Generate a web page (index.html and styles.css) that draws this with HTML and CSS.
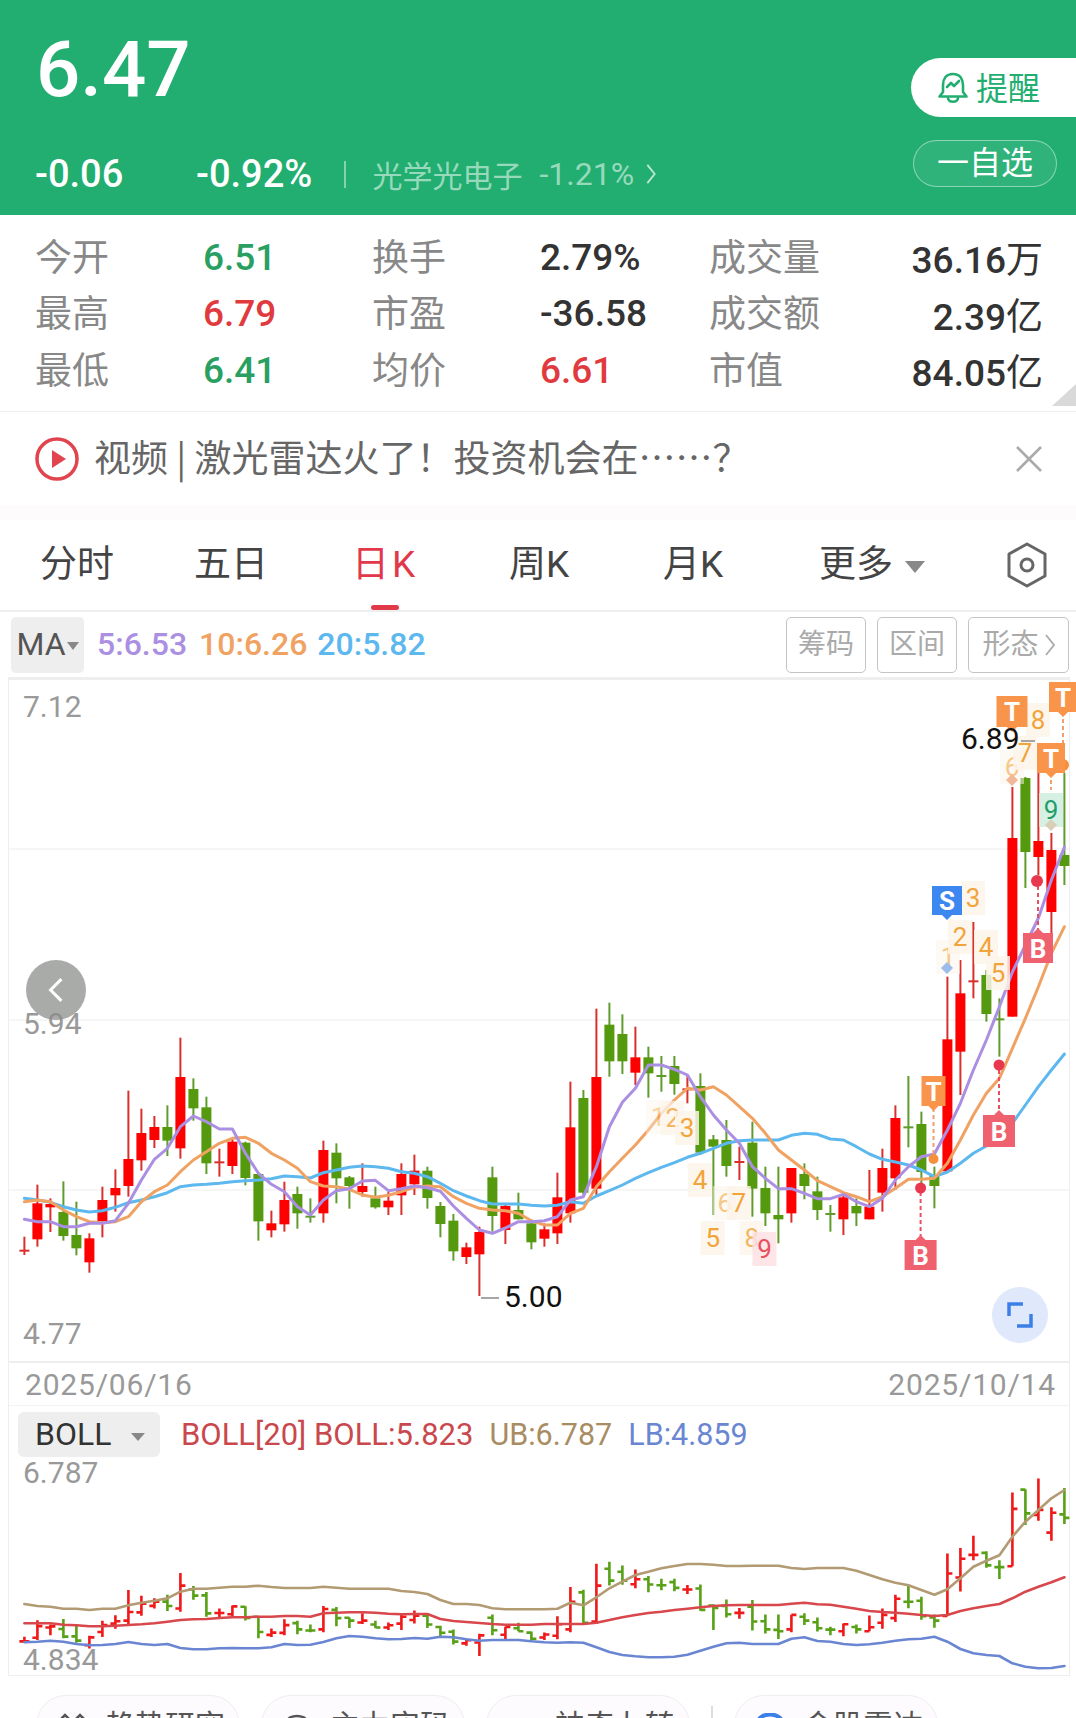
FILE: index.html
```html
<!DOCTYPE html>
<html lang="zh-CN">
<head>
<meta charset="utf-8">
<title>6.47</title>
<link rel="stylesheet" href="styles.css">
</head>
<body>
<div class="page">
  <header class="quote">
    <div class="quote-left">
      <div class="price">6.47</div>
      <div class="change-row">
        <span class="chg-a">-0.06</span>
        <span class="chg-b">-0.92%</span>
        <span class="chg-sep"></span>
        <span class="sector">光学光电子</span>
        <span class="sector-pct">-1.21%</span>
        <svg class="sector-arrow" viewBox="0 0 12 24"><path d="M2 2 L10 12 L2 22"/></svg>
      </div>
    </div>
    <div class="quote-right">
      <div class="remind">
        <svg class="bell" viewBox="0 0 30 32"><path d="M15 2 C8 2 5 7 5 13 V20 L1.5 24.5 H28.5 L25 20 V13 C25 7 22 2 15 2 Z"/><path d="M10 26 C10 31 20 31 20 26"/><path d="M9 15 L13 11 L16 14 L21 9"/></svg>
        <span class="remind-text">提醒</span>
      </div>
      <div class="watch">一自选</div>
    </div>
  </header>

  <section class="stats">
    <span class="lab">今开</span><span class="val up-g">6.51</span>
    <span class="lab">换手</span><span class="val">2.79%</span>
    <span class="lab">成交量</span><span class="val right">36.16<span class="unit">万</span></span>
    <span class="lab">最高</span><span class="val dn-r">6.79</span>
    <span class="lab">市盈</span><span class="val">-36.58</span>
    <span class="lab">成交额</span><span class="val right">2.39<span class="unit">亿</span></span>
    <span class="lab">最低</span><span class="val up-g">6.41</span>
    <span class="lab">均价</span><span class="val dn-r">6.61</span>
    <span class="lab">市值</span><span class="val right">84.05<span class="unit">亿</span></span>
    <i class="corner"></i>
  </section>

  <section class="news">
    <svg class="play" viewBox="0 0 44 44"><circle cx="22" cy="22" r="20"/><path d="M17 13 L31 22 L17 31 Z"/></svg>
    <span class="news-text">视频 | 激光雷达火了！投资机会在……？</span>
    <svg class="close" viewBox="0 0 26 26"><path d="M1 1 L25 25 M25 1 L1 25"/></svg>
  </section>
  <div class="band"></div>

  <nav class="tabs">
    <span class="tab">分时</span>
    <span class="tab">五日</span>
    <span class="tab active">日K</span>
    <span class="tab">周K</span>
    <span class="tab">月K</span>
    <span class="tab more">更多<i class="caret caret-more"></i></span>
    <svg class="hex" viewBox="0 0 42 46"><path d="M21 2 L39 12 V34 L21 44 L3 34 V12 Z"/><circle cx="21" cy="23" r="6"/></svg>
  </nav>

  <div class="ma-row">
    <span class="ma-select">MA<i class="caret caret-ma"></i></span>
    <span class="ma m5">5:6.53</span>
    <span class="ma m10">10:6.26</span>
    <span class="ma m20">20:5.82</span>
    <span class="tools">
      <span class="tool">筹码</span>
      <span class="tool">区间</span>
      <span class="tool tool-wide">形态<svg class="tool-arrow" viewBox="0 0 10 22"><path d="M1 1 L9 11 L1 21"/></svg></span>
    </span>
  </div>

  <section class="chart">
    <div class="pane-main">
      <svg id="main-chart" class="chart-svg" width="1060" height="681" viewBox="9 680 1060 681"></svg>
      <span class="back"><svg viewBox="0 0 20 30"><path d="M16 3 L4 15 L16 27"/></svg></span>
      <span class="expand"><svg viewBox="0 0 26 26"><path d="M2 14 V2 H16 M24 12 V24 H10"/></svg></span>
    </div>
    <div class="dates"><span>2025/06/16</span><span>2025/10/14</span></div>
    <div class="pane-boll">
      <div class="boll-head">
        <span class="boll-select">BOLL<i class="caret caret-boll"></i></span>
        <span class="b-mid">BOLL[20] BOLL:5.823</span>
        <span class="b-up">UB:6.787</span>
        <span class="b-lo">LB:4.859</span>
      </div>
      <svg id="boll-chart" class="chart-svg" width="1060" height="212" viewBox="9 1463 1060 212"></svg>
    </div>
  </section>

  <div class="pills">
    <span class="pill"><svg class="pill-ic" viewBox="0 0 26 8"><path d="M1 7 L6 2 L10 6 M16 7 L21 2 L25 6"/></svg>趋势研究</span>
    <span class="pill"><svg class="pill-ic" viewBox="0 0 26 8"><path d="M3 9 C4 1 22 1 23 9"/></svg>主力实码</span>
    <span class="pill">神奇九转</span>
    <span class="pill-sep"></span>
    <span class="pill"><svg class="pill-ic globe" viewBox="0 0 26 8"><path d="M1 9 C2 -1 24 -1 25 9"/></svg>金股雷达</span>
  </div>
</div>
<script src="chart.js"></script>
</body>
</html>
```
FILE: styles.css
```css
*{box-sizing:border-box}
html,body{margin:0;padding:0;background:#fff}
body{font-family:Roboto,"Noto Sans CJK SC",sans-serif;color:#333}
.page{width:1076px;height:1718px;overflow:hidden}

.quote{height:215px;background:#21ae70;display:flex;justify-content:space-between;color:#fff}
.quote-left{padding:25px 0 0 35px}
.price{font-size:78px;line-height:90px;font-weight:500;padding-left:1px}
.change-row{display:flex;align-items:center;height:44px;margin-top:37px;font-size:38px;font-weight:500}
.chg-a{width:161px}
.chg-b{width:119px}
.chg-sep{width:1.5px;height:27px;margin-left:29px;background:rgba(255,255,255,.45)}
.sector{margin-left:27px;font-size:30px;font-weight:400;color:rgba(255,255,255,.55)}
.sector-pct{margin-left:17px;font-size:32px;font-weight:400;color:rgba(255,255,255,.55)}
.sector-arrow{width:12px;height:22px;margin-left:11px;fill:none;stroke:rgba(255,255,255,.7);stroke-width:2}
.quote-right{width:165px;padding-top:58px}
.remind{height:59px;background:#fff;border-radius:30px 0 0 30px;display:flex;align-items:center;padding-left:27px;color:#21ae70;font-size:32px}
.remind-text{margin-bottom:4px}
.bell{width:30px;height:32px;margin-right:8px;fill:none;stroke:#21ae70;stroke-width:2.6;stroke-linejoin:round;stroke-linecap:round}
.watch{width:144px;height:47px;margin:23px 0 0 2px;border:1.5px solid rgba(255,255,255,.45);border-radius:24px;background:rgba(255,255,255,.07);text-align:center;font-size:32px;line-height:44px}

.stats{position:relative;height:197px;padding:14px 0 0 35px;display:grid;grid-template-columns:168px 169px 168px 169px 115px 219px;grid-auto-rows:56.5px;align-items:center;border-bottom:1px solid #eee}
.lab{font-size:37px;color:#888;line-height:50px;margin-top:3px;white-space:nowrap}
.val{font-size:37px;font-weight:500;color:#333;white-space:nowrap}
.unit{font-weight:400}
.right{text-align:right}
.up-g{color:#2a9f62}
.dn-r{color:#e03a3e}
.corner{position:absolute;right:0;bottom:5px;width:24px;height:22px;background:#d9d9d9;clip-path:polygon(100% 0,100% 100%,0 100%)}

.news{height:93px;display:flex;align-items:center;padding:0 34px 0 35px}
.play{width:44px;height:44px;margin-right:15px;fill:none;stroke:#e2444f;stroke-width:3.5}
.play path{fill:#e2444f;stroke:none}
.news-text{flex:1;font-family:"Noto Sans CJK SC",sans-serif;font-size:37px;color:#666;white-space:nowrap;line-height:50px;margin-bottom:6px}
.close{width:26px;height:26px;fill:none;stroke:#aaa;stroke-width:2.6}
.band{height:15px;background:#fefbfd}

.tabs{height:92px;display:flex;align-items:center;border-bottom:2px solid #eee}
.tab{position:relative;width:154px;text-align:center;font-size:37px;color:#444;line-height:90px}
.tab.active{color:#e2394a;letter-spacing:3px}
.tab.active::after{content:"";position:absolute;left:63px;bottom:0;width:28px;height:5px;border-radius:3px;background:#e2394a}
.tab.more{width:204px}
.hex{width:42px;height:46px;margin-left:32px;fill:none;stroke:#666;stroke-width:3;stroke-linejoin:round}
.caret{display:inline-block;width:0;height:0;border-style:solid;border-color:#888 transparent transparent;vertical-align:middle}
.caret-more{border-width:12px 10px 0;margin-left:12px}
.caret-ma{border-width:8px 6px 0;margin-left:1px}
.caret-boll{border-width:8px 7px 0;margin-left:20px}

.ma-row{height:65px;display:flex;align-items:center;padding:0 7px 0 11px;font-size:32px}
.ma-select{width:73px;height:56px;background:#eee;border-radius:5px;color:#555;font-size:32px;line-height:54px;text-align:center;white-space:nowrap}
.ma{font-weight:500;margin-bottom:2px}
.m5{margin-left:13px;color:#ab8fe2}
.m10{margin-left:12px;color:#f0a263}
.m20{margin-left:10px;color:#5cb8ee}
.tools{margin-left:auto;display:flex;gap:11px}
.tool{width:80px;height:56px;border:1.5px solid #c4c4c4;border-radius:5px;display:flex;align-items:center;justify-content:center;font-size:28px;color:#aaa;line-height:1}
.tool-wide{width:101px}
.tool-arrow{width:10px;height:22px;margin-left:6px;fill:none;stroke:#aaa;stroke-width:1.8}

.chart{width:1062px;margin-left:8px;border:1px solid #eee;border-width:3px 1px 1px;border-top-color:#eee}
.chart-svg{display:block;overflow:visible}
.pane-main{position:relative;height:681px}
.back{position:absolute;left:17px;top:280px;width:60px;height:60px;border-radius:50%;background:rgba(136,138,136,.72);display:flex;align-items:center;justify-content:center}
.back svg{width:18px;height:28px;fill:none;stroke:#fff;stroke-width:3.4}
.expand{position:absolute;left:983px;top:607px;width:56px;height:56px;border-radius:50%;background:#dfe9fb;display:flex;align-items:center;justify-content:center}
.expand svg{width:26px;height:26px;fill:none;stroke:#3c7fe8;stroke-width:3.5}
.dates{height:45px;border-top:2px solid #eee;border-bottom:1px solid #f3f3f3;display:flex;justify-content:space-between;align-items:center;padding:0 13px 0 16px;font-size:30px;letter-spacing:.8px;color:#999}
.boll-head{height:57px;display:flex;align-items:center;padding:0 0 0 9px;white-space:nowrap;font-size:30.5px}
.boll-select{width:142px;height:45px;border-radius:6px;background:#eee;color:#333;line-height:45px;padding-left:17px;font-size:32px}
.b-mid{margin-left:21px;color:#c9484d;font-size:31px}
.b-up{margin-left:16px;color:#a98c62}
.b-lo{margin-left:16px;color:#6a86d2}

.pills{display:flex;align-items:flex-start;gap:21px;padding:19px 0 0 36px}
.pill{width:204px;height:60px;flex:none;border:1px solid #efedef;border-radius:30px;background:#fdfbfd;padding:12px 0 0 68px;font-size:30px;line-height:36px;color:#555;position:relative}
.pill-ic{position:absolute;left:22px;top:17px;width:26px;height:8px;fill:none;stroke:#555;stroke-width:2.6}
.pill-ic.globe{stroke:#3c7fe8;stroke-width:4}
.pill-sep{width:2px;height:40px;margin-top:11px;background:#ddd;flex:none}

.axis{font-size:30px;fill:#999}
.mark{font-size:30px;fill:#111}
.grid{stroke:#f3f3f3;stroke-width:1.5}
.tag-t{font-size:26px;font-weight:700;fill:#fff;text-anchor:middle}
.num{font-size:26px;text-anchor:middle}
.line{fill:none;stroke-width:3;stroke-linejoin:round;stroke-linecap:round}
.line-thin{stroke-width:2.6}
```
FILE: chart.js
```js
(function () {
  var NS = 'http://www.w3.org/2000/svg';
  var X0 = 24.4, DX = 13.0;
  var RED = '#ff0000', REDW = '#d9302c', GRN = '#55990f', GRNW = '#5f9c2c';
  function xOf(i) { return X0 + DX * i; }
  function yOf(c) { return 950 + c / 3; }

  function el(parent, name, attrs, text) {
    var e = document.createElementNS(NS, name);
    for (var k in attrs) e.setAttribute(k, attrs[k]);
    if (text !== undefined) e.textContent = text;
    parent.appendChild(e);
    return e;
  }

  // colour, high, body top, body bottom, low, in crop units (y = 950 + v/3)
  var K = [
    ['r',860,902,902,915],['r',704,760,868,890],['r',745,762,772,846],['g',694,786,858,872],
    ['g',755,855,895,916],['r',850,865,937,968],['r',710,750,815,862],['r',658,714,736,785],
    ['r',422,627,708,740],['r',476,549,631,662],['r',498,531,570,594],['g',466,531,572,618],
    ['r',263,381,595,626],['g',385,417,475,512],['g',440,472,640,672],['r',596,637,637,680],
    ['r',568,575,648,672],['g',575,578,684,706],['g',672,672,814,872],['r',782,820,841,862],
    ['r',695,750,823,845],['g',710,732,790,836],['g',745,800,800,818],['r',572,600,790,818],
    ['g',580,608,685,760],['g',678,682,708,776],['r',640,708,726,740],['g',710,745,772,776],
    ['r',725,752,772,795],['r',640,672,736,795],['r',614,662,703,735],['g',650,662,744,776],
    ['g',756,768,822,862],['g',792,812,904,932],['r',878,892,921,942],['r',830,846,913,1038],
    ['g',650,682,798,845],['r',765,768,840,882],['g',728,780,808,808],['g',810,820,877,898],
    ['r',820,838,866,890],['r',668,742,850,882],['r',395,532,790,818],['g',420,444,728,735],
    ['r',176,381,716,740],['g',158,224,334,380],['g',193,252,334,372],['r',230,322,368,405],
    ['g',290,322,370,443],['g',318,378,378,425],['g',318,348,402,434],['r',375,418,418,460],
    ['g',370,408,608,615],['g',555,568,590,795],['g',510,570,648,680],['r',590,636,636,690],
    ['g',515,578,716,800],['g',650,714,790,828],['g',650,795,808,880],['r',654,654,790,818],
    ['g',640,672,708,748],['g',680,724,780,810],['g',765,792,792,845],['r',735,742,808,855],
    ['g',745,768,790,828],['r',660,770,808,808],['r',596,654,728,785],['r',466,504,685,720],
    ['g',378,532,532,592],['g',485,522,666,700],['g',650,678,708,775],['r',80,268,664,665],
    ['r',30,130,305,435],['r',-84,94,94,145],['g',60,75,192,215],['g',145,208,208,320],
    ['r',-489,-336,200,200],['g',-519,-516,-294,-186],['r',-621,-327,-279,-225],
    ['r',-351,-300,-114,-39],['g',-531,-285,-252,-195]
  ];
  var MA5 = [808,815,815,830,830,820,820,812,760,690,628,595,530,498,515,537,537,610,670,703,725,770,795,750,722,716,693,691,722,716,708,713,724,768,805,840,850,834,815,815,812,800,750,740,650,530,457,415,345,345,358,375,440,495,540,580,650,685,716,716,730,746,746,733,755,770,745,690,650,620,612,540,460,360,270,170,66,-15,-96,-210,-309];
  var MA10 = [755,750,755,780,800,815,818,815,800,755,725,705,665,630,605,580,565,562,580,610,630,655,695,708,710,718,735,742,736,725,712,708,710,740,760,775,780,782,790,812,825,825,790,775,710,665,625,585,540,490,450,415,420,410,435,470,505,550,600,630,660,692,710,728,740,755,740,715,688,688,685,640,570,495,430,385,295,205,110,10,-70];
  var MA20 = [745,750,757,770,780,786,782,772,758,750,740,728,710,705,703,700,695,692,690,686,678,680,684,668,660,652,648,650,655,665,670,680,700,722,738,752,762,762,762,766,768,766,755,760,738,722,705,685,668,652,638,622,610,595,580,572,570,570,570,556,550,553,567,570,590,612,628,636,645,660,680,666,640,610,588,570,520,465,410,360,312];
  // Bollinger bands, crop units (y = 1330 + v/3)
  var UB = [822,828,830,836,836,840,836,836,826,818,812,805,785,776,776,773,770,770,767,771,774,774,774,770,773,776,776,776,776,783,786,792,810,822,822,825,835,838,838,838,838,836,818,826,802,775,755,735,725,715,708,702,702,704,708,708,707,707,707,714,717,714,714,714,722,735,748,758,766,780,794,778,745,710,692,676,620,575,540,505,480];
  var MB = [880,880,880,884,886,889,889,887,885,883,880,875,870,868,867,864,862,862,860,860,858,858,860,850,848,847,847,848,851,853,852,852,867,873,876,879,882,884,884,884,882,882,882,882,878,870,862,855,849,845,840,836,832,828,826,825,825,825,825,821,818,823,824,830,836,843,846,848,851,855,858,855,843,835,828,822,805,785,770,757,742];
  var LB = [937,935,932,935,942,946,945,942,936,942,945,942,954,958,958,955,954,955,955,952,942,945,944,936,925,918,920,925,928,927,924,926,920,922,928,932,930,930,930,934,937,938,937,938,952,966,975,979,982,982,980,974,962,950,940,938,942,942,942,926,922,933,935,942,945,943,938,932,928,926,920,935,957,970,975,978,1000,1010,1015,1014,1008];

  function poly(svg, arr, color, toY, cls) {
    var pts = arr.map(function (v, i) { return xOf(i).toFixed(1) + ',' + toY(v).toFixed(1); }).join(' ');
    el(svg, 'polyline', { points: pts, 'class': 'line ' + (cls || ''), stroke: color });
  }

  /* ---------- main pane ---------- */
  var m = document.getElementById('main-chart');
  [849, 1020, 1190].forEach(function (y) {
    el(m, 'line', { x1: 9, x2: 1069, y1: y, y2: y, 'class': 'grid' });
  });

  K.forEach(function (k, i) {
    var x = xOf(i), up = k[0] === 'r';
    var hi = yOf(k[1]), top = yOf(k[2]), bot = yOf(k[3]), lo = yOf(k[4]);
    el(m, 'line', { x1: x, x2: x, y1: hi, y2: lo, stroke: up ? REDW : GRNW, 'stroke-width': 2 });
    if (k[2] === k[3]) {
      el(m, 'line', { x1: x - 5, x2: x + 5, y1: top, y2: top, stroke: up ? REDW : GRNW, 'stroke-width': 2 });
    } else {
      el(m, 'rect', { x: x - 5, y: top, width: 10, height: bot - top, fill: up ? RED : GRN });
    }
  });

  poly(m, MA20, '#5cb8ee', yOf);
  poly(m, MA10, '#f0a263', yOf);
  poly(m, MA5, '#ab8fe2', yOf);

  // dashed connectors and dots
  [[920.6, 1192, 1240, '#e8505f'], [933.5, 1108, 1155, '#f0a070'], [999, 1070, 1113, '#e8505f'],
   [1038, 886, 933, '#e8505f'], [1063, 712, 762, '#f0a070'], [1051, 773, 790, '#f0a070']].forEach(function (d) {
    el(m, 'line', { x1: d[0], x2: d[0], y1: d[1], y2: d[2], stroke: d[3], 'stroke-width': 2, 'stroke-dasharray': '4 3' });
  });
  [[920.6, 1188, 5.5, '#e8384f'], [933.5, 1159, 5, '#f58f3c'], [999, 1065, 5.5, '#e8384f'],
   [1037, 881, 6, '#e8384f'], [1063, 765, 6, '#f58f3c']].forEach(function (d) {
    el(m, 'circle', { cx: d[0], cy: d[1], r: d[2], fill: d[3] });
  });

  // numbered tags: text, x, y, colour, background, opacity
  var C = '#f2a33a', CB = '#fdf5ea';
  [['1', 658, 1117, C, CB, .45], ['2', 672.7, 1118, C, CB, .8], ['3', 687, 1128, C, CB, 1],
   ['4', 700, 1180, C, CB, 1], ['5', 712.7, 1238, C, CB, 1], ['6', 724.8, 1203, C, CB, .6],
   ['7', 738.8, 1203, C, CB, 1], ['8', 751.7, 1238, C, CB, .8], ['9', 764.5, 1249, '#e8505f', '#fde0e4', 1],
   ['1', 948, 957, C, CB, .6], ['2', 960, 937, C, CB, 1], ['3', 973, 898, C, CB, 1],
   ['4', 986, 947, C, CB, 1], ['5', 998, 973, C, CB, 1], ['6', 1012, 767, C, CB, .6],
   ['7', 1025, 753, C, CB, 1], ['8', 1038, 720, C, CB, 1], ['9', 1051, 810, '#1f9d6a', '#cfeede', 1]
  ].forEach(function (n) {
    var g = el(m, 'g', { opacity: n[5] });
    el(g, 'rect', { x: n[1] - 12, y: n[2] - 17, width: 24, height: 34, fill: n[4], opacity: .85 });
    el(g, 'text', { x: n[1], y: n[2] + 9, 'class': 'num', fill: n[3] }, n[0]);
  });

  // small diamonds over a candle high
  [[947, 968, '#9dbcec'], [1012, 780, '#f0b896'], [1051, 825, '#d8cfb8']].forEach(function (d) {
    el(m, 'path', { d: 'M' + d[0] + ' ' + (d[1] - 6) + ' l6 6 l-6 6 l-6 -6 z', fill: d[2] });
  });

  // signal flags: letter, centre x, top, width, height, colour, pointer direction
  [['T', 933.5, 1076, 24, 30, '#f8954a', 1], ['B', 920.6, 1240, 32, 30, '#f0616f', -1],
   ['B', 999, 1115, 32, 32, '#f0616f', -1], ['T', 1012, 696, 31, 31, '#f8954a', 1],
   ['T', 1063, 682, 28, 30, '#f8954a', 1], ['T', 1051, 743, 28, 30, '#f8954a', 1],
   ['S', 947, 886, 30, 29, '#3c87f0', 1], ['B', 1038, 933, 30, 30, '#f0616f', -1]
  ].forEach(function (f) {
    var x = f[1], t = f[2], w = f[3], h = f[4];
    var l = x - w / 2, r = x + w / 2, b = t + h, d;
    if (f[6] > 0) d = 'M' + l + ' ' + t + ' H' + r + ' V' + b + ' H' + (x + 5) + ' L' + x + ' ' + (b + 5) + ' L' + (x - 5) + ' ' + b + ' H' + l + ' Z';
    else d = 'M' + l + ' ' + t + ' H' + (x - 5) + ' L' + x + ' ' + (t - 5) + ' L' + (x + 5) + ' ' + t + ' H' + r + ' V' + b + ' H' + l + ' Z';
    el(m, 'path', { d: d, fill: f[5] });
    el(m, 'text', { x: x, y: t + h / 2 + 9.5, 'class': 'tag-t' }, f[0]);
  });

  // axis and extreme labels
  [['7.12', 23, 717], ['5.94', 23, 1034], ['4.77', 23, 1344]].forEach(function (a) {
    el(m, 'text', { x: a[1], y: a[2], 'class': 'axis' }, a[0]);
  });
  el(m, 'text', { x: 961, y: 749, 'class': 'mark' }, '6.89');
  el(m, 'line', { x1: 1021, x2: 1035, y1: 741, y2: 741, stroke: '#888', 'stroke-width': 1.5 });
  el(m, 'text', { x: 504, y: 1307, 'class': 'mark' }, '5.00');
  el(m, 'line', { x1: 481, x2: 499, y1: 1298, y2: 1298, stroke: '#888', 'stroke-width': 1.5 });

  /* ---------- Bollinger pane ---------- */
  var b = document.getElementById('boll-chart');
  function bandY(v) { return 1330 + v / 3; }
  function barY(c) { return 1573 + (yOf(c) - 1037.7) * 0.321; }

  K.forEach(function (k, i) {
    var x = xOf(i), up = k[0] === 'r', c = up ? '#f01818' : '#58a015';
    var openY = barY(up ? k[3] : k[2]), closeY = barY(up ? k[2] : k[3]);
    el(b, 'path', {
      d: 'M' + x + ' ' + barY(k[1]) + ' V' + barY(k[4]) +
         ' M' + (x - 5) + ' ' + openY + ' H' + x + ' M' + x + ' ' + closeY + ' H' + (x + 5),
      fill: 'none', stroke: c, 'stroke-width': 2.6
    });
  });
  poly(b, UB, '#b29a72', bandY, 'line-thin');
  poly(b, MB, '#d8474c', bandY, 'line-thin');
  poly(b, LB, '#6a86d2', bandY, 'line-thin');

  [['6.787', 23, 1483], ['4.834', 23, 1670]].forEach(function (a) {
    el(b, 'text', { x: a[1], y: a[2], 'class': 'axis' }, a[0]);
  });
})();
```
